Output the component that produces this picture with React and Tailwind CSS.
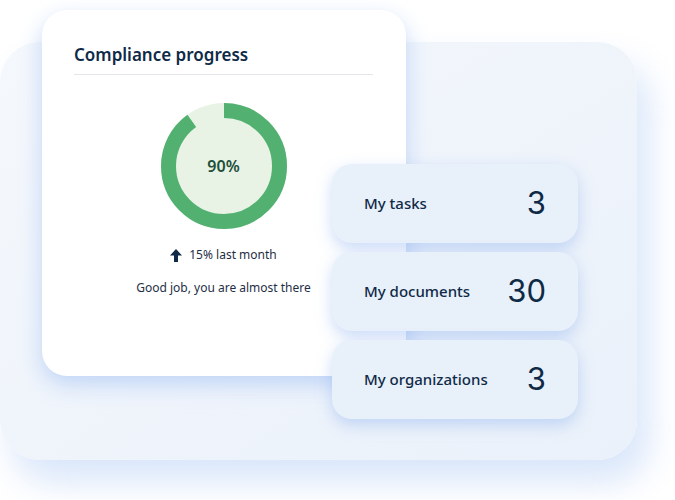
import React from "react";

function Donut() {
  const r = 55.5;
  const c = 2 * Math.PI * r;
  return (
    <svg width="130" height="130" viewBox="0 0 130 130">
      <circle cx="65" cy="65" r="63" fill="#e8f3e6" />
      <circle
        cx="65"
        cy="65"
        r={r}
        fill="none"
        stroke="#52b170"
        strokeWidth="15"
        strokeDasharray={`${c * 0.9} ${c}`}
        transform="rotate(-90 65 65)"
      />
    </svg>
  );
}

function Stat({ label, value }) {
  return (
    <div className="flex h-[79px] w-[246px] items-center justify-between rounded-[20px] bg-[#e8f0fa] pl-8 pr-8 shadow-[0_6px_16px_rgba(110,155,235,0.35)]">
      <span className="text-[15px] font-medium text-[#0f2a47]">{label}</span>
      <span className="text-[31px] font-normal text-[#0f2a47] [font-family:Inter,sans-serif]">{value}</span>
    </div>
  );
}

export default function App() {
  return (
    <div className="relative h-[500px] w-[675px] overflow-hidden bg-white [font-family:'Noto_Sans',sans-serif]">
      <div className="mt-[42px] h-[418px] w-[637px] rounded-[40px] bg-gradient-to-br from-[#f5f8fc] to-[#eaf1fa] shadow-[12px_22px_34px_rgba(170,200,245,0.45)]" />
      <div className="absolute left-[42px] top-[10px] flex h-[366px] w-[364px] flex-col items-center rounded-[25px] bg-white pl-8 pr-[33px] pt-[34px] shadow-[0_8px_22px_rgba(120,165,240,0.4)]">
        <div className="w-full border-b border-[#e3e6eb] pb-[8px]">
          <h2 className="text-[17px] font-semibold leading-[22px] text-[#0f2a47]">Compliance progress</h2>
        </div>
        <div className="relative mt-[26px] h-[130px] w-[130px]">
          <Donut />
          <div className="absolute inset-0 flex items-center justify-center text-[16px] font-semibold text-[#21503a]">90%</div>
        </div>
        <div className="mt-[15px] flex items-center gap-[7px] text-[12px] text-[#1e2f45]">
          <svg width="12" height="13" viewBox="0 0 12 13">
            <path d="M6 0 L12 6.5 L8 6.5 L8 13 L4 13 L4 6.5 L0 6.5 Z" fill="#0f2a47" />
          </svg>
          <span>15% last month</span>
        </div>
        <p className="mt-[15px] text-[12px] text-[#1e2f45]">Good job, you are almost there</p>
      </div>
      <div className="absolute left-[332px] top-[164px] flex flex-col gap-[9px]">
        <Stat label="My tasks" value="3" />
        <Stat label="My documents" value="30" />
        <Stat label="My organizations" value="3" />
      </div>
    </div>
  );
}
